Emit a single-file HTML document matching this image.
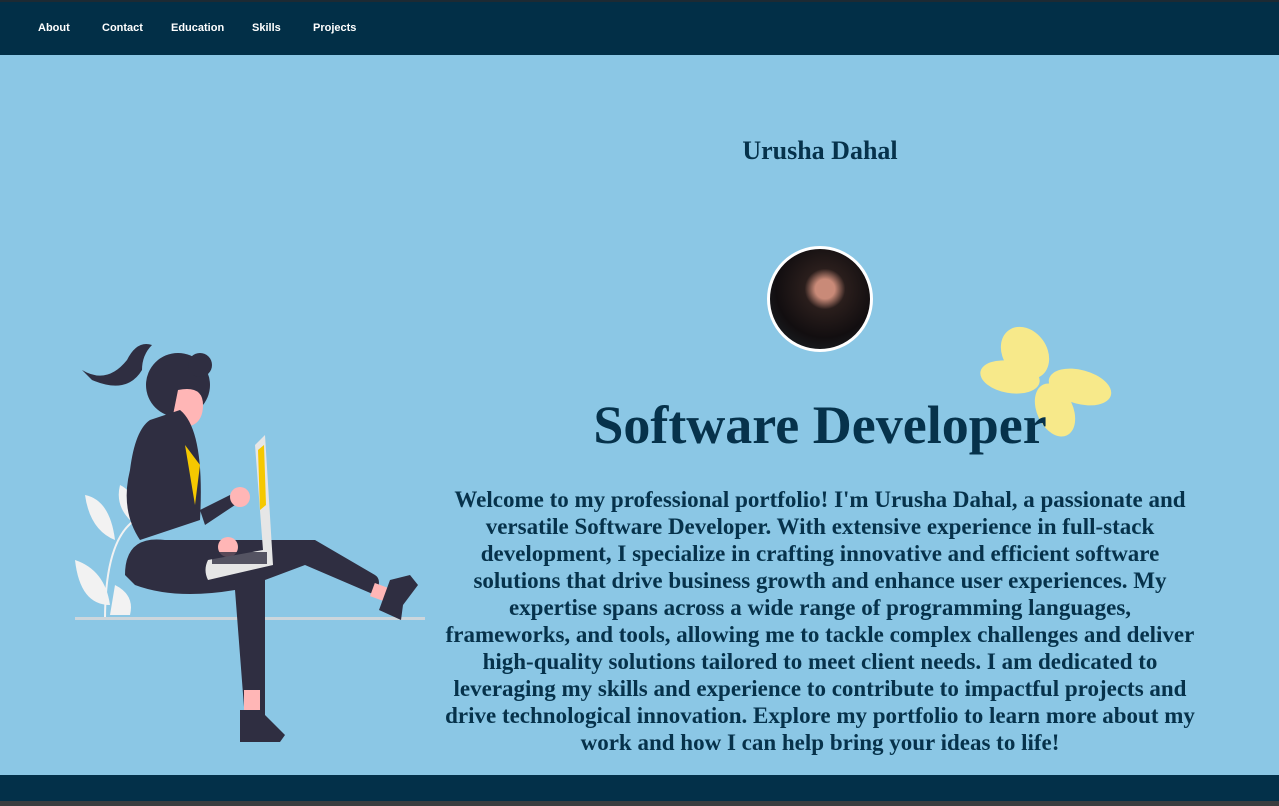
<!DOCTYPE html>
<html><head><meta charset="utf-8"><style>
*{margin:0;padding:0;box-sizing:border-box}
body{width:1279px;height:806px;background:#3a3d40;overflow:hidden;position:relative;font-family:"Liberation Serif",serif}
.nav{position:absolute;left:0;top:0;width:1279px;height:55px;background:#022f47;border-top:2px solid #1d2a33}
.nav a{position:absolute;top:20px;color:#fff;font:bold 11px "Liberation Sans",sans-serif;text-decoration:none}
.main{position:absolute;left:0;top:55px;width:1279px;height:720px;background:#8bc7e5}
.foot{position:absolute;left:0;top:775px;width:1279px;height:26px;background:#033049}
.name{position:absolute;left:620px;width:400px;top:136px;text-align:center;color:#06324b;font-size:26px;font-weight:bold}
.title{position:absolute;left:470px;width:700px;top:394px;text-align:center;color:#06324b;font-size:54px;font-weight:bold}
.p{position:absolute;left:400px;width:840px;top:486px;text-align:center;color:#06324b;font-size:23px;line-height:27px;font-weight:bold;white-space:nowrap}
.av{position:absolute;left:767px;top:246px;width:106px;height:106px;border-radius:50%;border:3px solid #fff;background:radial-gradient(circle at 55% 40%,#c98a78 0 12%,#2a1e1c 25%,#120e10 60%,#1f2a30 100%)}
</style></head><body>
<div class="nav"><a style="left:38px">About</a><a style="left:102px">Contact</a><a style="left:171px">Education</a><a style="left:252px">Skills</a><a style="left:313px">Projects</a></div>
<div class="main"></div>
<div class="foot"></div>
<div class="name">Urusha Dahal</div>
<div class="av"></div>
<svg style="position:absolute;left:975px;top:325px" width="145" height="125" viewBox="0 0 145 125">
<g fill="#f7e98a">
<ellipse cx="50" cy="28" rx="22" ry="28" transform="rotate(-35 50 28)"/>
<ellipse cx="35" cy="52" rx="30" ry="16" transform="rotate(10 35 52)"/>
<ellipse cx="105" cy="62" rx="32" ry="17" transform="rotate(15 105 62)"/>
<ellipse cx="80" cy="85" rx="18" ry="28" transform="rotate(-25 80 85)"/>
</g></svg>
<div class="title">Software Developer</div>
<div class="p">Welcome to my professional portfolio! I'm Urusha Dahal, a passionate and<br>versatile Software Developer. With extensive experience in full-stack<br>development, I specialize in crafting innovative and efficient software<br>solutions that drive business growth and enhance user experiences. My<br>expertise spans across a wide range of programming languages,<br>frameworks, and tools, allowing me to tackle complex challenges and deliver<br>high-quality solutions tailored to meet client needs. I am dedicated to<br>leveraging my skills and experience to contribute to impactful projects and<br>drive technological innovation. Explore my portfolio to learn more about my<br>work and how I can help bring your ideas to life!</div>
<svg style="position:absolute;left:60px;top:330px" width="380" height="420" viewBox="0 0 380 420">
<g fill="#f2f2f2"><path d="M15 230 q30 10 35 45 q-30 0 -35 -45z"/><path d="M25 165 q25 5 30 45 q-25 -10 -30 -45z"/><path d="M60 155 q20 10 10 35 q-15 -15 -10 -35z"/><path d="M55 255 q20 10 15 30 h-20z"/></g>
<path d="M45 290 q0 -80 30 -100" stroke="#f2f2f2" stroke-width="2" fill="none"/>
<rect x="15" y="287" width="350" height="3" fill="#ccd6dc"/>
<path d="M22 40 q25 15 45 -10 q10 -20 25 -15 q-10 10 -10 25 q-15 25 -50 10z" fill="#2f2e41"/>
<circle cx="118" cy="55" r="32" fill="#2f2e41"/><circle cx="140" cy="35" r="12" fill="#2f2e41"/>
<path d="M118 60 q25 -5 25 15 q0 15 -10 20 q-15 5 -20 -10z" fill="#ffb6b6"/>
<path d="M90 90 l30 -10 q25 20 20 110 l-60 20 q-20 -30 -10 -70 q5 -40 20 -50z" fill="#2f2e41"/>
<path d="M125 115 l15 20 l-5 40 z" fill="#f5c800"/><path d="M110 245 l20 -30 l-5 35z" fill="#f5c800"/>
<path d="M65 245 q0 -40 40 -35 l150 0 l60 35 q8 5 0 20 l-70 -30 l-40 15 l0 140 l-20 0 l-10 -130 q-60 10 -100 -5z" fill="#2f2e41"/>
<rect x="312" y="255" width="14" height="14" fill="#ffb6b6" transform="rotate(20 319 262)"/>
<path d="M330 250 l20 -5 l8 10 l-15 20 l-2 15 l-22 -10z" fill="#2f2e41"/>
<path d="M140 180 l30 -15 l5 10 l-30 20z" fill="#2f2e41"/><circle cx="180" cy="167" r="10" fill="#ffb6b6"/>
<circle cx="168" cy="217" r="10" fill="#ffb6b6"/>
<path d="M195 115 l10 -10 l8 130 l-65 15 q-5 -10 0 -20 l55 -10z" fill="#e6e6e6"/><path d="M198 120 l6 -5 l2 60 l-6 5z" fill="#f5c800"/>
<g fill="#2f2e41"><rect x="152" y="222" width="55" height="12" opacity=".8"/></g>
<path d="M180 380 h20 l25 25 l-5 7 l-40 0z" fill="#2f2e41"/><rect x="184" y="360" width="16" height="20" fill="#ffb6b6"/>
</svg>
</body></html>
